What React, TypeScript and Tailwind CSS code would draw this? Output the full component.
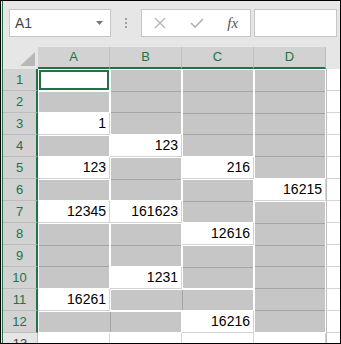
import React from "react"

const COLS = ["A", "B", "C", "D"]

// values typed into the sheet
const VALUES: Record<string, string> = {
  A3: "1",
  B4: "123",
  A5: "123",
  C5: "216",
  D6: "16215",
  A7: "12345",
  B7: "161623",
  C8: "12616",
  B10: "1231",
  A11: "16261",
  C12: "16216",
}

// selected blank areas: [col, row, cols, rows]
const AREAS: [number, number, number, number][] = [
  [1, 2, 1, 1],
  [2, 1, 1, 3],
  [3, 1, 1, 4],
  [4, 1, 1, 5],
  [1, 4, 1, 1],
  [2, 5, 1, 2],
  [1, 6, 1, 1],
  [3, 6, 1, 2],
  [4, 7, 1, 6],
  [1, 8, 1, 3],
  [2, 8, 1, 2],
  [3, 9, 1, 2],
  [2, 11, 2, 1],
  [1, 12, 2, 1],
]

const ROWS = Array.from({ length: 12 }, (_, i) => i + 1)

function place(c: number, r: number, w = 1, h = 1) {
  return { gridColumn: `${c} / span ${w}`, gridRow: `${r} / span ${h}` }
}

export default function App() {
  return (
    <div className="w-[341px] h-[344px] border border-black bg-[#e6e6e6] overflow-hidden font-['Liberation_Sans',Arial,sans-serif]">
      <div className="ml-px h-full border-l border-[#217346] flex flex-col">
        {/* formula bar */}
        <div className="h-[46px] shrink-0 flex items-start pt-[8px]">
          <div className="ml-[6px] w-[102px] h-[28px] bg-white border border-[#c6c6c6] flex items-center justify-between pl-[5px] pr-[7px]">
            <span className="text-[14px] text-[#444]">A1</span>
            <svg width="7" height="4" viewBox="0 0 7 4">
              <polygon points="0,0 7,0 3.5,4" fill="#777" />
            </svg>
          </div>
          <div className="w-[30px] h-[28px] flex flex-col items-center justify-center gap-[2px]">
            <div className="w-[2px] h-[2px] bg-[#a0a0a0]" />
            <div className="w-[2px] h-[2px] bg-[#a0a0a0]" />
            <div className="w-[2px] h-[2px] bg-[#a0a0a0]" />
          </div>
          <div className="w-[110px] h-[28px] bg-white border border-[#c6c6c6] flex items-center justify-around">
            <svg width="12" height="12" viewBox="0 0 12 12">
              <path d="M1 1L11 11M11 1L1 11" stroke="#b3b3b3" strokeWidth="1.3" />
            </svg>
            <svg width="14" height="10" viewBox="0 0 14 10">
              <polyline points="1,5 5,9 13,1" fill="none" stroke="#b3b3b3" strokeWidth="1.7" />
            </svg>
            <span className="font-['Liberation_Serif',serif] italic text-[15px] text-[#555] leading-none">fx</span>
          </div>
          <div className="ml-[3px] mr-[3px] flex-1 h-[28px] bg-white border border-[#c6c6c6]" />
        </div>

        {/* column headers */}
        <div className="h-[22px] shrink-0 flex">
          <div className="w-[35px] h-[20px] flex items-end justify-end pr-[3px] pb-px">
            <svg width="15" height="14" viewBox="0 0 15 14">
              <polygon points="15,0 15,14 0,14" fill="#b8b8b8" />
            </svg>
          </div>
          {COLS.map((c) => (
            <div
              key={c}
              className="w-[72px] bg-[#d2d2d2] border-r border-r-[#bdbdbd] border-b-2 border-b-[#217346] flex items-center justify-center text-[13px] text-[#217346]"
            >
              {c}
            </div>
          ))}
          <div className="flex-1" />
        </div>

        {/* body */}
        <div className="flex-1 min-h-0 flex overflow-hidden">
          <div className="w-[35px] shrink-0 flex flex-col">
            {ROWS.map((r) => (
              <div
                key={r}
                className="h-[22px] shrink-0 bg-[#d2d2d2] border-b border-b-[#bdbdbd] border-r-2 border-r-[#217346] flex items-center justify-center text-[13px] text-[#217346]"
              >
                {r}
              </div>
            ))}
            <div className="h-[22px] shrink-0 border-r border-r-[#bdbdbd] flex items-center justify-center text-[13px] text-[#444]">
              13
            </div>
          </div>

          <div className="flex-1 grid grid-cols-[72px_72px_72px_72px_1fr] grid-rows-[repeat(12,22px)_1fr] bg-white">
            {/* active cell */}
            <div style={place(1, 1)} className="p-px">
              <div className="h-full border-2 border-[#217346]" />
            </div>

            {Object.entries(VALUES).map(([key, v]) => (
              <div
                key={key}
                style={place(COLS.indexOf(key[0]) + 1, Number(key.slice(1)))}
                className="bg-white border-r border-b border-[#d4d4d4] flex items-end justify-end pr-[3px] pb-[3px] text-[14px] leading-[16px] text-black"
              >
                {v}
              </div>
            ))}

            {AREAS.map(([c, r, w, h]) => (
              <div key={`${c}-${r}`} style={place(c, r, w, h)} className="bg-white p-px">
                <div className="h-full flex flex-col gap-px bg-[#a5a5a5]">
                  {Array.from({ length: h }).map((_, i) => (
                    <div key={i} className="flex-1 flex gap-px">
                      {Array.from({ length: w }).map((_, j) => (
                        <div key={j} className="flex-1 bg-[#c6c6c6]" />
                      ))}
                    </div>
                  ))}
                </div>
              </div>
            ))}

            {/* column E, partly visible */}
            {ROWS.map((r) => (
              <div key={`E${r}`} style={place(5, r)} className="border-l border-l-[#bdbdbd] border-b border-b-[#d4d4d4]" />
            ))}
            {/* row 13 */}
            {COLS.map((c, i) => (
              <div key={`${c}13`} style={place(i + 1, 13)} className="border-r border-[#d4d4d4]" />
            ))}
            <div style={place(5, 13)} className="border-l border-l-[#bdbdbd]" />
          </div>
        </div>
      </div>
    </div>
  )
}
